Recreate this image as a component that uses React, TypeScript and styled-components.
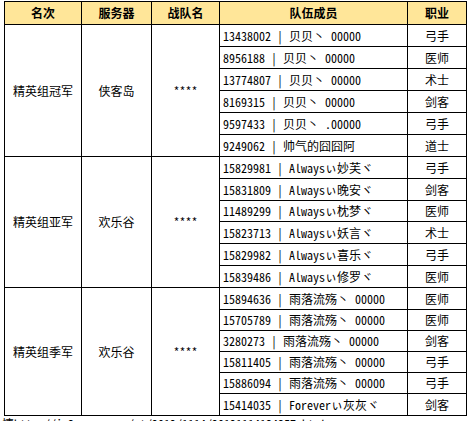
import React from "react";
import styled, { createGlobalStyle } from "styled-components";

const Global = createGlobalStyle`
  html, body { margin: 0; padding: 0; background: #ffffff; }
  body {
    font-family: "Noto Sans Mono CJK SC", "Noto Sans CJK SC", "Liberation Mono", monospace;
    font-size: 12px;
    color: #000000;
  }
`;

const Page = styled.div`
  padding: 1px 0 0 2px;
  overflow: hidden;
`;

const Table = styled.table`
  border-collapse: collapse;
  table-layout: fixed;
  width: 462px;
  margin-left: 2px;
  border: 1px solid #000;
`;

const HeadRow = styled.tr`
  height: 23px;
  background: #ffe699;
`;

const HeadCell = styled.th`
  border: 1px solid #000;
  padding: 0;
  font-weight: bold;
  font-size: 12px;
  line-height: 14px;
  text-align: center;
  vertical-align: middle;
`;

const Row = styled.tr<{ $h: number }>`
  height: ${(p) => p.$h}px;
`;

const GroupCell = styled.td`
  border: 1px solid #000;
  padding: 0;
  line-height: 14px;
  text-align: center;
  vertical-align: middle;
`;

const MemberCell = styled.td`
  border: 1px solid #000;
  padding: 0 0 0 3px;
  line-height: 14px;
  white-space: pre;
  overflow: hidden;
  vertical-align: middle;
`;

const RoleCell = styled.td`
  border: 1px solid #000;
  padding: 0;
  line-height: 14px;
  text-align: center;
  vertical-align: middle;
`;

const Note = styled.div`
  white-space: nowrap;
  line-height: 14px;
  margin-top: 1px;
`;

type Group = {
  rank: string;
  server: string;
  team: string;
  members: [string, string][];
};

const groups: Group[] = [
  {
    rank: "精英组冠军",
    server: "侠客岛",
    team: "****",
    members: [
      ["13438002 | 贝贝丶 00000", "弓手"],
      ["8956188 | 贝贝丶 00000", "医师"],
      ["13774807 | 贝贝丶 00000", "术士"],
      ["8169315 | 贝贝丶 00000", "剑客"],
      ["9597433 | 贝贝丶 .00000", "弓手"],
      ["9249062 | 帅气的囧囧阿", "道士"],
    ],
  },
  {
    rank: "精英组亚军",
    server: "欢乐谷",
    team: "****",
    members: [
      ["15829981 | Alwaysぃ妙芙ヾ", "弓手"],
      ["15831809 | Alwaysぃ晚安ヾ", "剑客"],
      ["11489299 | Alwaysぃ枕梦ヾ", "医师"],
      ["15823713 | Alwaysぃ妖言ヾ", "术士"],
      ["15829982 | Alwaysぃ喜乐ヾ", "弓手"],
      ["15839486 | Alwaysぃ修罗ヾ", "医师"],
    ],
  },
  {
    rank: "精英组季军",
    server: "欢乐谷",
    team: "****",
    members: [
      ["15894636 | 雨落流殇丶 00000", "医师"],
      ["15705789 | 雨落流殇丶 00000", "医师"],
      ["3280273 | 雨落流殇丶 00000", "剑客"],
      ["15811405 | 雨落流殇丶 00000", "弓手"],
      ["15886094 | 雨落流殇丶 00000", "弓手"],
      ["15414035 | Foreverぃ灰灰ヾ", "剑客"],
    ],
  },
];

const rowHeights = [22, 22, 22, 22, 22, 22, 22, 22, 21, 22, 22, 22, 22, 21, 21, 21, 21, 22];

export default function App() {
  return (
    <Page>
      <Global />
      <Table>
        <colgroup>
          <col style={{ width: 77 }} />
          <col style={{ width: 70 }} />
          <col style={{ width: 68 }} />
          <col style={{ width: 188 }} />
          <col style={{ width: 59 }} />
        </colgroup>
        <thead>
          <HeadRow>
            <HeadCell>名次</HeadCell>
            <HeadCell>服务器</HeadCell>
            <HeadCell>战队名</HeadCell>
            <HeadCell>队伍成员</HeadCell>
            <HeadCell>职业</HeadCell>
          </HeadRow>
        </thead>
        <tbody>
          {groups.map((g, gi) =>
            g.members.map(([member, role], mi) => (
              <Row key={`${gi}-${mi}`} $h={rowHeights[gi * 6 + mi]}>
                {mi === 0 && (
                  <>
                    <GroupCell rowSpan={6}>{g.rank}</GroupCell>
                    <GroupCell rowSpan={6}>{g.server}</GroupCell>
                    <GroupCell rowSpan={6}>{g.team}</GroupCell>
                  </>
                )}
                <MemberCell>{member}</MemberCell>
                <RoleCell>{role}</RoleCell>
              </Row>
            ))
          )}
        </tbody>
      </Table>
      <Note>情http://jx3.xoyo.com/zt/2012/1114/20121114134357.html</Note>
    </Page>
  );
}
